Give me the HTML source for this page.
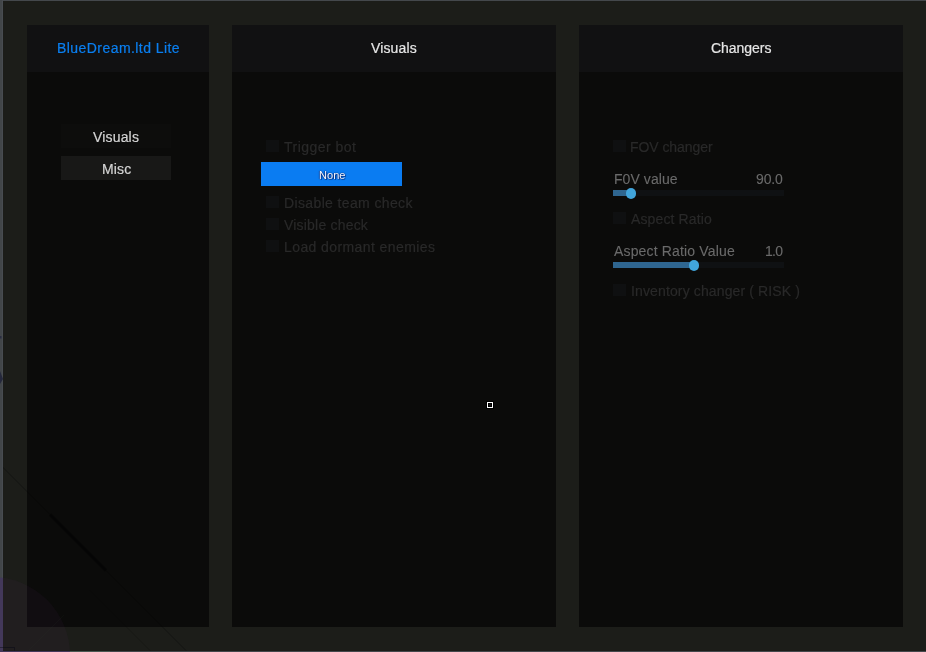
<!DOCTYPE html>
<html>
<head>
<meta charset="utf-8">
<title>BlueDream.ltd Lite</title>
<style>
html,body{margin:0;padding:0;}
body{width:926px;height:652px;overflow:hidden;background:#44484c;position:relative;font-family:"Liberation Sans",sans-serif;}
#win{position:absolute;left:3px;top:1px;width:923px;height:649.5px;background:#1c1d19;overflow:hidden;}
.panel{position:absolute;top:25px;height:602px;background:#0b0b0a;}
.hdr{position:absolute;left:0;top:0;right:0;height:47px;background:#111112;}
.t{position:absolute;white-space:nowrap;line-height:16px;font-size:14px;will-change:transform;-webkit-text-stroke:0.2px;}
.ttl{color:#e6e6e6;}
.btn{position:absolute;left:34px;width:110px;height:23px;}
.cb{position:absolute;width:13px;height:12px;background:#0f1011;}
.dim{color:#292929;}
.lbl{color:#6a6a6a;-webkit-text-stroke:0.1px;}
.track{position:absolute;height:6px;background:#0f1113;}
.fill{position:absolute;height:6px;background:#2f6690;}
.knob{position:absolute;width:10.6px;height:10.6px;border-radius:50%;background:#41a5dc;}
</style>
</head>
<body>
<svg id="under" width="926" height="652" viewBox="0 0 926 652" style="position:absolute;left:0;top:0;">
  <rect x="0" y="0" width="2" height="652" fill="#424649"/>
  <rect x="2" y="0" width="1" height="652" fill="#484c51"/>
  <rect x="20" y="650" width="90" height="2" fill="#4b5853"/>
  <circle cx="-8" cy="655" r="78" fill="#43385a"/>
  <rect x="0" y="336" width="1.5" height="2.5" fill="#2a2d42"/>
  <path d="M0 371 L3 379 L0 384 Z" fill="#25283c"/>
</svg>
<div id="win"></div>

<!-- sidebar -->
<div class="panel" style="left:27px;width:182px;">
  <div class="hdr"></div>
  <div class="t" id="brand" style="left:29.6px;letter-spacing:0.44px;top:15px;color:#0a7ff0;">BlueDream.ltd Lite</div>
  <div class="btn" style="top:99px;height:24px;background:#0d0d0c;"></div>
  <div class="t" id="b1" style="left:66.2px;letter-spacing:0.17px;top:104px;color:#d4d4d4;">Visuals</div>
  <div class="btn" style="top:131px;background:#181817;height:24px;"></div>
  <div class="t" id="b2" style="left:74.8px;letter-spacing:0.13px;top:136px;color:#d4d4d4;">Misc</div>
</div>

<!-- visuals -->
<div class="panel" style="left:232px;width:324px;">
  <div class="hdr"></div>
  <div class="t ttl" id="h2" style="left:139.0px;letter-spacing:0.13px;top:15px;">Visuals</div>

  <div class="cb" style="left:34px;top:115px;"></div>
  <div class="t dim" id="r1" style="left:51.7px;letter-spacing:0.48px;top:114px;">Trigger bot</div>

  <div style="position:absolute;left:29px;top:137px;width:141px;height:24px;background:#0a7cf2;"></div>
  <div class="t" id="none" style="left:87.3px;letter-spacing:0.04px;top:142px;font-size:11px;color:#f4f8ff;-webkit-text-stroke:0;text-shadow:0 0 1.5px rgba(0,20,90,.95),1px 1px 0 rgba(0,25,100,.55),-1px 0 0 rgba(0,25,100,.35);">None</div>

  <div class="cb" style="left:34px;top:171px;"></div>
  <div class="t dim" id="r2" style="left:52.0px;letter-spacing:0.37px;top:170px;">Disable team check</div>
  <div class="cb" style="left:34px;top:193px;"></div>
  <div class="t dim" id="r3" style="left:51.7px;letter-spacing:0.20px;top:192px;">Visible check</div>
  <div class="cb" style="left:34px;top:215px;"></div>
  <div class="t dim" id="r4" style="left:52.3px;letter-spacing:0.41px;top:214px;">Load dormant enemies</div>
</div>

<!-- changers -->
<div class="panel" style="left:579px;width:324px;">
  <div class="hdr"></div>
  <div class="t ttl" id="h3" style="left:132.0px;letter-spacing:-0.03px;top:15px;">Changers</div>

  <div class="cb" style="left:34px;top:115px;"></div>
  <div class="t dim" id="c1" style="left:51.4px;letter-spacing:-0.07px;top:114px;">FOV changer</div>

  <div class="t lbl" id="c2" style="left:34.5px;letter-spacing:0.07px;top:146px;">F0V value</div>
  <div class="t lbl" id="c2v" style="left:177.3px;letter-spacing:-0.13px;top:146px;">90.0</div>
  <div class="track" style="left:34px;top:165px;width:171px;"></div>
  <div class="fill" style="left:34px;top:165px;width:14px;"></div>
  <div class="knob" style="left:46.6px;top:163px;"></div>

  <div class="cb" style="left:34px;top:187px;"></div>
  <div class="t dim" id="c3" style="left:52.1px;letter-spacing:0.12px;top:186px;">Aspect Ratio</div>

  <div class="t lbl" id="c4" style="left:35.1px;letter-spacing:0.16px;top:218px;">Aspect Ratio Value</div>
  <div class="t lbl" id="c4v" style="left:186.0px;letter-spacing:-0.75px;top:218px;">1.0</div>
  <div class="track" style="left:34px;top:237px;width:171px;"></div>
  <div class="fill" style="left:34px;top:237px;width:80px;"></div>
  <div class="knob" style="left:109.9px;top:235px;"></div>

  <div class="cb" style="left:34px;top:259px;"></div>
  <div class="t dim" id="c5" style="left:51.7px;letter-spacing:0.13px;top:258px;">Inventory changer ( RISK )</div>
</div>

<svg id="over" width="926" height="652" viewBox="0 0 926 652" style="position:absolute;left:0;top:0;pointer-events:none;">
  <defs><clipPath id="wc"><rect x="3" y="1" width="923" height="649.5"/></clipPath></defs>
  <g clip-path="url(#wc)" fill="none">
    <circle cx="-8" cy="655" r="78" fill="rgb(120,60,150)" fill-opacity="0.055"/>
    <path d="M0 464.5 L188 652.5" stroke="#000" stroke-opacity="0.3" stroke-width="1"/>
    <path d="M50 514.5 L106 570.5" stroke="#000" stroke-opacity="0.4" stroke-width="3.2"/>
    <path d="M90 590.5 L152 652.5" stroke="#000" stroke-opacity="0.18" stroke-width="1"/>
    <path d="M28 651 L64 615" stroke="#2a3a2a" stroke-opacity="0.12" stroke-width="1"/>
    <path d="M0 647.5 H14.5 V652" stroke="#101018" stroke-opacity="0.7" stroke-width="1"/>
  </g>
  <path d="M0 647.5 H3" stroke="#1c1c2a" stroke-opacity="0.7" stroke-width="1" fill="none"/>
</svg>
<!-- cursor -->
<div style="position:absolute;left:486px;top:401px;width:8px;height:8px;background:#000;"></div>
<div style="position:absolute;left:487px;top:402px;width:4px;height:4px;border:1px solid #fff;background:#000;"></div>
<div style="position:absolute;left:489px;top:404px;width:2px;height:2px;background:#161616;"></div>
</body>
</html>
